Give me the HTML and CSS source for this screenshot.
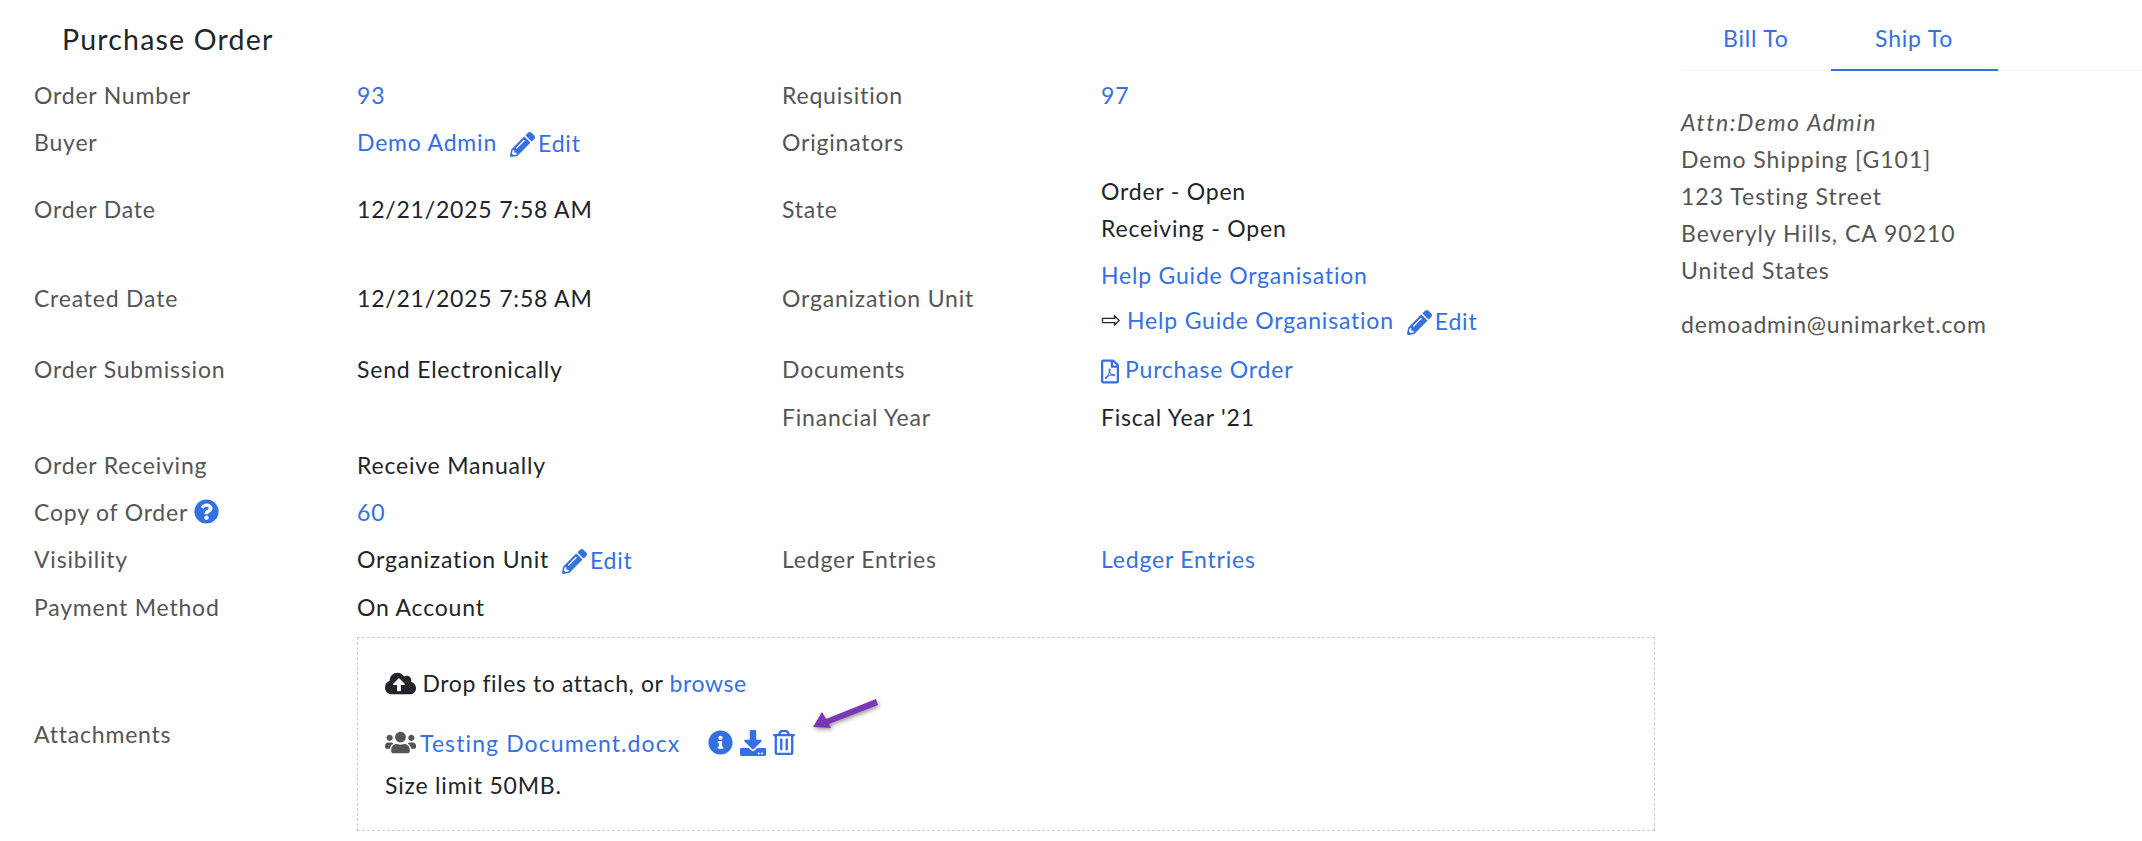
FILE: index.html
```html
<!DOCTYPE html>
<html lang="en">
<head>
<meta charset="utf-8">
<title>Purchase Order</title>
<link rel="stylesheet" href="styles.css">
</head>
<body>
<svg class="defs" aria-hidden="true">
  <symbol id="pencil" viewBox="0 0 512 512"><path d="M497.9 142.1l-46.1 46.1c-4.7 4.7-12.3 4.7-17 0l-111-111c-4.7-4.7-4.7-12.3 0-17l46.1-46.1c18.7-18.7 49.1-18.7 67.9 0l60.1 60.1c18.8 18.7 18.8 49.1 0 67.9zM284.2 99.8L21.6 362.4.4 483.9c-2.9 16.4 11.4 30.6 27.8 27.8l121.5-21.3 262.6-262.6c4.7-4.7 4.7-12.3 0-17l-111-111c-4.8-4.7-12.4-4.7-17.1 0zM124.1 339.9c-5.5-5.5-5.5-14.3 0-19.8l154-154c5.5-5.5 14.3-5.5 19.8 0s5.5 14.3 0 19.8l-154 154c-5.5 5.5-14.3 5.5-19.8 0zM88 424h48v36.3l-64.5 11.3-31.1-31.1L51.7 376H88v48z"/></symbol>
</svg>
<div class="page">
  <main class="order">
    <h1 class="title">Purchase Order</h1>
    <div class="details">
      <div class="label">Order Number</div>
      <div class="value"><a href="#">93</a></div>
      <div class="label">Requisition</div>
      <div class="value"><a href="#">97</a></div>

      <div class="label">Buyer</div>
      <div class="value"><a href="#">Demo Admin</a><a href="#" class="edit"><svg class="icon pencil"><use href="#pencil"/></svg>Edit</a></div>
      <div class="label">Originators</div>
      <div class="value"></div>

      <div class="label">Order Date</div>
      <div class="value">12/21/2025 7:58 AM</div>
      <div class="label">State</div>
      <div class="value stack state"><span>Order - Open</span><span>Receiving - Open</span></div>

      <div class="label">Created Date</div>
      <div class="value">12/21/2025 7:58 AM</div>
      <div class="label">Organization Unit</div>
      <div class="value stack org">
        <a href="#">Help Guide Organisation</a>
        <span class="org-line"><span class="arrow">⇨</span><a href="#">Help Guide Organisation</a><a href="#" class="edit"><svg class="icon pencil"><use href="#pencil"/></svg>Edit</a></span>
      </div>

      <div class="label">Order Submission</div>
      <div class="value">Send Electronically</div>
      <div class="label">Documents</div>
      <div class="value"><a href="#" class="doc"><svg class="icon pdf" viewBox="0 0 384 512"><path d="M369.9 97.9L286 14C277 5 264.8-.1 252.1-.1H48C21.5 0 0 21.5 0 48v416c0 26.5 21.5 48 48 48h288c26.5 0 48-21.5 48-48V131.9c0-12.7-5.1-25-14.1-34zM332.1 128H256V51.9l76.1 76.1zM48 464V48h160v104c0 13.3 10.7 24 24 24h104v288H48zm250.2-143.7c-12.2-12-47-8.7-64.4-6.5-17.2-10.5-28.7-25-36.8-46.3 3.9-16.1 10.1-40.6 5.4-56-4.2-26.2-37.8-23.6-42.6-5.9-4.4 16.1-.4 38.5 7 67.1-10 23.9-24.9 56-35.4 74.4-20 10.3-47 26.2-51 46.2-3.3 15.8 26 55.2 76.1-31.2 22.4-7.4 46.8-16.5 68.4-20.1 18.9 10.2 41 17 55.8 17 25.5 0 28-28.2 17.5-38.7zm-198.1 77.8c5.1-13.7 24.5-29.5 30.4-35-19 30.3-30.4 35.7-30.4 35zm81.6-190.6c7.4 0 6.7 32.1 1.8 40.8-4.4-13.9-4.3-40.8-1.8-40.8zm-24.4 136.6c9.7-16.9 18-37 24.7-54.7 8.3 15.1 18.9 27.2 30.1 35.5-20.8 4.3-38.9 13.1-54.8 19.2zm131.6-5s-5 6-37.3-7.8c35.1-2.6 40.9 5.4 37.3 7.8z"/></svg>Purchase Order</a></div>

      <div class="label"></div>
      <div class="value"></div>
      <div class="label">Financial Year</div>
      <div class="value">Fiscal Year '21</div>

      <div class="label">Order Receiving</div>
      <div class="value">Receive Manually</div>
      <div class="label"></div>
      <div class="value"></div>

      <div class="label">Copy of Order<svg class="icon help" viewBox="0 0 512 512"><path d="M504 256c0 136.997-111.043 248-248 248S8 392.997 8 256C8 119.083 119.043 8 256 8s248 111.083 248 248zM262.655 90c-54.497 0-89.255 22.957-116.549 63.758-3.536 5.286-2.353 12.415 2.715 16.258l34.699 26.31c5.205 3.947 12.621 3.008 16.665-2.122 17.864-22.658 30.113-35.797 57.303-35.797 20.429 0 45.698 13.148 45.698 32.958 0 14.976-12.363 22.667-32.534 33.976C247.128 238.528 216 254.941 216 296v4c0 6.627 5.373 12 12 12h56c6.627 0 12-5.373 12-12v-1.333c0-28.462 83.186-29.647 83.186-106.667 0-58.002-60.165-102-116.531-102zM256 338c-25.365 0-46 20.635-46 46 0 25.364 20.635 46 46 46s46-20.636 46-46c0-25.365-20.635-46-46-46z"/></svg></div>
      <div class="value"><a href="#">60</a></div>
      <div class="label"></div>
      <div class="value"></div>

      <div class="label">Visibility</div>
      <div class="value">Organization Unit<a href="#" class="edit"><svg class="icon pencil"><use href="#pencil"/></svg>Edit</a></div>
      <div class="label">Ledger Entries</div>
      <div class="value"><a href="#">Ledger Entries</a></div>

      <div class="label">Payment Method</div>
      <div class="value">On Account</div>
      <div class="label"></div>
      <div class="value"></div>

      <div class="label">Attachments</div>
      <div class="dropzone">
        <div class="drop-line"><svg class="icon cloud" viewBox="0 0 640 512"><path d="M537.6 226.6c4.1-10.7 6.4-22.4 6.4-34.6 0-53-43-96-96-96-19.7 0-38.1 6-53.3 16.2C367 64.2 315.3 32 256 32c-88.4 0-160 71.6-160 160 0 2.7.1 5.4.2 8.1C40.2 219.8 0 273.2 0 336c0 79.5 64.5 144 144 144h368c70.7 0 128-57.3 128-128 0-61.9-44-113.6-102.4-125.4zM393.4 288H328v112c0 8.8-7.2 16-16 16h-48c-8.8 0-16-7.2-16-16V288h-65.4c-14.3 0-21.4-17.2-11.3-27.3l105.4-105.4c6.2-6.2 16.4-6.2 22.6 0l105.4 105.4c10.1 10.1 2.9 27.3-11.3 27.3z"/></svg> Drop files to attach, or <a href="#">browse</a></div>
        <div class="file-line">
          <svg class="icon users" viewBox="0 0 640 512"><path d="M96 224c35.3 0 64-28.7 64-64s-28.7-64-64-64-64 28.7-64 64 28.7 64 64 64zm448 0c35.3 0 64-28.7 64-64s-28.7-64-64-64-64 28.7-64 64 28.7 64 64 64zm32 32h-64c-17.6 0-33.5 7.1-45.1 18.6 40.3 22.1 68.9 62 75.1 109.4h66c17.7 0 32-14.3 32-32v-32c0-35.3-28.7-64-64-64zm-256 0c61.9 0 112-50.1 112-112S381.9 32 320 32 208 82.1 208 144s50.1 112 112 112zm76.8 32h-8.3c-20.8 10-43.9 16-68.5 16s-47.6-6-68.5-16h-8.3C179.6 288 128 339.6 128 403.2V432c0 26.5 21.5 48 48 48h288c26.5 0 48-21.5 48-48v-28.8c0-63.6-51.6-115.2-115.2-115.2zm-223.7-13.4C161.5 263.1 145.6 256 128 256H64c-35.3 0-64 28.7-64 64v32c0 17.7 14.3 32 32 32h65.9c6.3-47.4 34.9-87.3 75.2-109.4z"/></svg>
          <a href="#" class="file-name">Testing Document.docx</a>
          <span class="file-actions">
            <svg class="icon info" viewBox="0 0 512 512"><path d="M256 8C119.043 8 8 119.083 8 256c0 136.997 111.043 248 248 248s248-111.003 248-248C504 119.083 392.957 8 256 8zm0 110c23.196 0 42 18.804 42 42s-18.804 42-42 42-42-18.804-42-42 18.804-42 42-42zm56 254c0 6.627-5.373 12-12 12h-88c-6.627 0-12-5.373-12-12v-24c0-6.627 5.373-12 12-12h12v-64h-12c-6.627 0-12-5.373-12-12v-24c0-6.627 5.373-12 12-12h64c6.627 0 12 5.373 12 12v100h12c6.627 0 12 5.373 12 12v24z"/></svg>
            <svg class="icon download" viewBox="0 0 512 512"><path d="M216 0h80c13.3 0 24 10.7 24 24v168h87.7c17.8 0 26.7 21.5 14.1 34.1L269.7 378.3c-7.5 7.5-19.8 7.5-27.3 0L90.1 226.1c-12.6-12.6-3.7-34.1 14.1-34.1H192V24c0-13.3 10.7-24 24-24zm296 376v112c0 13.3-10.7 24-24 24H24c-13.3 0-24-10.7-24-24V376c0-13.3 10.7-24 24-24h146.7l49 49c20.1 20.1 52.5 20.1 72.6 0l49-49H488c13.3 0 24 10.7 24 24zm-124 88c0-11-9-20-20-20s-20 9-20 20 9 20 20 20 20-9 20-20zm64 0c0-11-9-20-20-20s-20 9-20 20 9 20 20 20 20-9 20-20z"/></svg>
            <svg class="icon trash" viewBox="0 0 448 512"><path d="M268 416h24a12 12 0 0 0 12-12V188a12 12 0 0 0-12-12h-24a12 12 0 0 0-12 12v216a12 12 0 0 0 12 12zM432 80h-82.41l-34-56.7A48 48 0 0 0 274.41 0H173.59a48 48 0 0 0-41.16 23.3L98.41 80H16A16 16 0 0 0 0 96v16a16 16 0 0 0 16 16h16v336a48 48 0 0 0 48 48h288a48 48 0 0 0 48-48V128h16a16 16 0 0 0 16-16V96a16 16 0 0 0-16-16zM171.84 50.91A6 6 0 0 1 177 48h94a6 6 0 0 1 5.15 2.91L293.61 80H154.39zM368 464H80V128h288zm-212-48h24a12 12 0 0 0 12-12V188a12 12 0 0 0-12-12h-24a12 12 0 0 0-12 12v216a12 12 0 0 0 12 12z"/></svg>
          </span>
          <svg class="callout" viewBox="0 0 70 40"><path d="M2 35 L11 20 L15 27 L65 7 L67 13 L18 32 L20 36 Z"/></svg>
        </div>
        <div class="size-line">Size limit 50MB.</div>
      </div>
    </div>
  </main>
  <aside class="address">
    <nav class="tabs">
      <a href="#" class="tab">Bill To</a>
      <a href="#" class="tab active">Ship To</a>
    </nav>
    <div class="address-body">
      <div class="attn">Attn:Demo Admin</div>
      <div>Demo Shipping [G101]</div>
      <div>123 Testing Street</div>
      <div>Beveryly Hills, CA 90210</div>
      <div>United States</div>
      <div class="email">demoadmin@unimarket.com</div>
    </div>
  </aside>
</div>
</body>
</html>
```
FILE: styles.css
```css
* { box-sizing: border-box; }
html, body { margin: 0; background: #fff; }
body {
  font-family: "Lato", "Liberation Sans", sans-serif;
  font-size: 23px;
  letter-spacing: 0.8px;
  color: #212529;
  overflow: hidden;
}
a { color: #3570e3; text-decoration: none; }
.defs { display: none; }
.page { display: flex; align-items: flex-start; height: 841px; }
.order { width: 1681px; flex: none; padding-left: 34px; }
.title {
  margin: 0;
  padding-left: 28px;
  height: 71px;
  line-height: 79px;
  font-size: 28.5px;
  letter-spacing: 1.2px;
  font-weight: 400;
  color: #212529;
}
.details {
  display: grid;
  grid-template-columns: 323px 425px 319px 553px;
  grid-template-rows: 47px 48px 85px 94px 48px 48px 47px 47px 48px 48px 205px;
}
.label, .value { display: flex; align-items: center; gap: 6px; white-space: pre; }
.label { color: #555; }
.stack { flex-direction: column; align-items: flex-start; justify-content: center; gap: 0; }
.state { padding-top: 2px; }
.state span { line-height: 37px; }
.org { gap: 16px; }
.org-line { display: flex; align-items: center; gap: 6px; }
.edit { margin-left: 7px; padding-top: 2px; }
.icon { fill: #3570e3; display: inline-block; flex: none; }
.pencil { width: 25px; height: 25px; margin-right: 3px; vertical-align: -5px; }
.pdf { width: 18px; height: 25px; margin-right: 6px; vertical-align: -6px; }
.help { width: 25px; height: 25px; }
.arrow { font-family: "DejaVu Sans", sans-serif; font-size: 24px; letter-spacing: 0; line-height: 24px; color: #212529; }
.dropzone {
  grid-column: 2 / 5;
  width: 1298px;
  height: 194px;
  align-self: center;
  border: 1px dashed #ccc;
  padding: 26px 27px;
}
.drop-line { height: 38px; line-height: 38px; letter-spacing: 0.6px; }
.cloud { fill: #212529; width: 31px; height: 25px; vertical-align: -4px; }
.file-line { display: flex; align-items: center; height: 38px; margin-top: 22px; position: relative; }
.users { fill: #555; width: 31px; height: 25px; margin-right: 4px; }
.file-name { letter-spacing: 1.1px; }
.file-actions { display: flex; align-items: center; gap: 7px; margin-left: 28px; }
.info { width: 25px; height: 25px; }
.download { width: 26px; height: 26px; }
.trash { width: 22px; height: 25px; }
.callout {
  position: absolute;
  left: 426px;
  top: -32px;
  width: 70px;
  height: 40px;
  fill: #7a38b8;
  filter: drop-shadow(1px 2px 2px rgba(0,0,0,.4));
}
.size-line { height: 38px; line-height: 38px; margin-top: 4px; }
.address { flex: 1; }
.tabs { display: flex; height: 71px; border-bottom: 1px solid #f0f0f0; }
.tab { padding: 0 42px; line-height: 76px; height: 71px; }
.tab.active { border-bottom: 2px solid #3570e3; min-width: 167px; text-align: center; padding: 0; }
.address-body { padding-top: 33px; color: #555; line-height: 37px; letter-spacing: 1px; }
.attn { font-style: italic; letter-spacing: 1.6px; }
.email { margin-top: 17px; letter-spacing: 0.8px; }
```
